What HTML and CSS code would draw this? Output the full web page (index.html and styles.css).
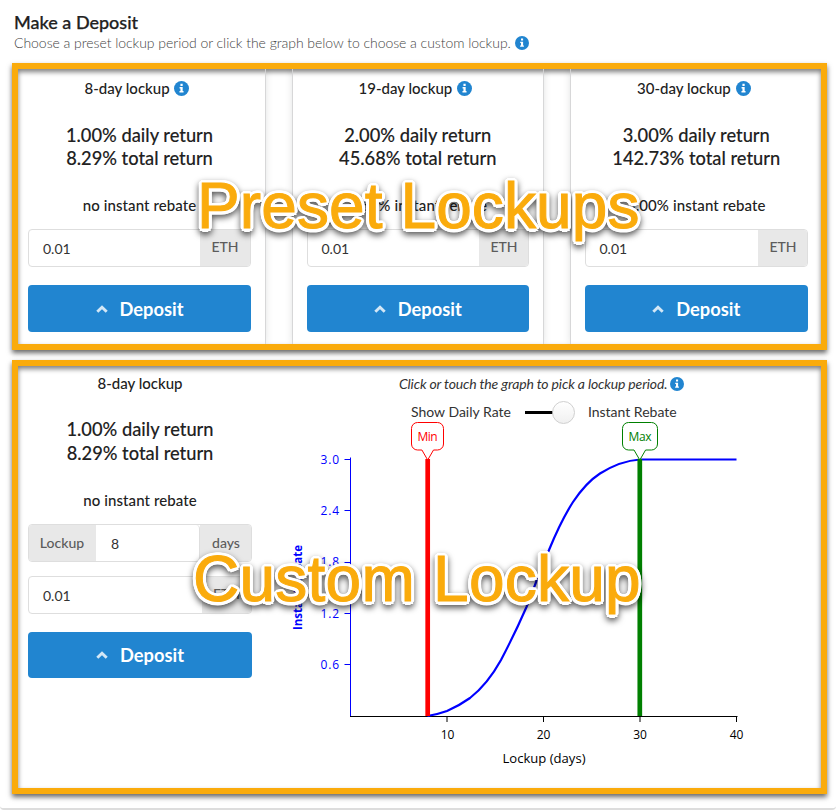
FILE: index.html
```
<!DOCTYPE html>
<html lang="en">
<head>
<meta charset="utf-8">
<title>Make a Deposit</title>
<link rel="stylesheet" href="styles.css">
</head>
<body>
<svg class="defs" aria-hidden="true">
  <symbol id="info" viewBox="0 0 14 14">
    <circle cx="7" cy="7" r="7" fill="#2185d0"/>
    <path d="M6 2.6h2.1v2H6zM5.2 5.7h2.9v3.7h.8v1.3H5.1V9.400h.9V7h-.8z" fill="#fff"/>
  </symbol>
  <symbol id="chevron" viewBox="0 0 12 8">
    <path d="M1.300 6.800 6 2.200l4.700 4.600" fill="none" stroke="#d3e7f6" stroke-width="2.900"/>
  </symbol>
</svg>
<main class="panel">
  <header class="head">
    <h1>Make a Deposit</h1>
    <p>Choose a preset lockup period or click the graph below to choose a custom lockup. <svg class="info"><use href="#info"/></svg></p>
  </header>

  <section class="frame presets">
    <article class="card first">
      <h2>8-day lockup <svg class="info"><use href="#info"/></svg></h2>
      <div class="returns">1.00% daily return<br>8.29% total return</div>
      <div class="rebate">no instant rebate</div>
      <div class="field"><span class="value">0.01</span><span class="unit">ETH</span></div>
      <button class="deposit"><svg class="chev"><use href="#chevron"/></svg>Deposit</button>
    </article>
    <article class="card">
      <h2>19-day lockup <svg class="info"><use href="#info"/></svg></h2>
      <div class="returns">2.00% daily return<br>45.68% total return</div>
      <div class="rebate">1.50% instant rebate</div>
      <div class="field"><span class="value">0.01</span><span class="unit">ETH</span></div>
      <button class="deposit"><svg class="chev"><use href="#chevron"/></svg>Deposit</button>
    </article>
    <article class="card last">
      <h2>30-day lockup <svg class="info"><use href="#info"/></svg></h2>
      <div class="returns">3.00% daily return<br>142.73% total return</div>
      <div class="rebate">3.00% instant rebate</div>
      <div class="field"><span class="value">0.01</span><span class="unit">ETH</span></div>
      <button class="deposit"><svg class="chev"><use href="#chevron"/></svg>Deposit</button>
    </article>
    <div class="callout callout-preset">Preset Lockups</div>
  </section>

  <section class="frame custom">
    <div class="form">
      <h2>8-day lockup</h2>
      <div class="returns">1.00% daily return<br>8.29% total return</div>
      <div class="rebate">no instant rebate</div>
      <div class="field period"><span class="unit left">Lockup</span><span class="value">8</span><span class="unit">days</span></div>
      <div class="field"><span class="value">0.01</span><span class="unit">ETH</span></div>
      <button class="deposit"><svg class="chev"><use href="#chevron"/></svg>Deposit</button>
    </div>
    <div class="graph">
      <p class="hint">Click or touch the graph to pick a lockup period. <svg class="info"><use href="#info"/></svg></p>
      <div class="switch"><span>Show Daily Rate</span><span class="toggle"></span><span>Instant Rebate</span></div>
      <svg class="chart" viewBox="285 422 460 350">
        <g stroke="#00f" stroke-width="1">
          <path d="M350.500 457.500V716.500M344.500 459.500h6M344.500 510.500h6M344.500 562.500h6M344.500 613.500h6M344.500 664.500h6" fill="none"/>
        </g>
        <g class="ylab">
          <text x="320.500" y="464" textLength="18.500">3.0</text>
          <text x="320.500" y="515" textLength="18.500">2.4</text>
          <text x="320.500" y="566" textLength="18.500">1.8</text>
          <text x="320.500" y="618" textLength="18.500">1.2</text>
          <text x="320.500" y="669" textLength="18.500">0.6</text>
        </g>
        <text class="ytitle" transform="translate(302 630) rotate(-90)" textLength="85" lengthAdjust="spacingAndGlyphs">Instant Rebate</text>
        <path d="M350 716.500H737.500M447 716v6M543.500 716v6M640 716v6M736.500 716v6" fill="none" stroke="#000"/>
        <g class="xlab">
          <text x="447.500" y="739">10</text><text x="543.500" y="739">20</text><text x="640" y="739">30</text><text x="736.500" y="739">40</text>
        </g>
        <text class="xtitle" x="502.500" y="763" textLength="83" lengthAdjust="spacingAndGlyphs">Lockup (days)</text>
        <path d="M427.500 716C434 715 440 713.500 447 711C455 707.500 463 703 470 698C479 691 491 678 501 660C512 639 520 622 526.500 607C534 588 541 568 549 550C556 533 564 516 573 502C581 490 590 480 600 473.500C612 466 625 460.500 640 459.500H736.500" fill="none" stroke="#00f" stroke-width="2.200"/>
        <path d="M427.700 459V716" stroke="red" stroke-width="4.700"/>
        <path d="M639.800 459V716" stroke="green" stroke-width="4.700"/>
        <path d="M417.500 422.500h20a6 6 0 0 1 6 6v15.500a6 6 0 0 1-6 6h-4l-5.800 10-5.800-10h-4.400a6 6 0 0 1-6-6v-15.500a6 6 0 0 1 6-6z" fill="#fff" stroke="red"/>
        <path d="M628.500 422.500h23a6 6 0 0 1 6 6v15.500a6 6 0 0 1-6 6h-5.900l-5.800 10-5.800-10h-5.500a6 6 0 0 1-6-6v-15.500a6 6 0 0 1 6-6z" fill="#fff" stroke="green"/>
        <text class="pin" x="417.500" y="441" fill="red" textLength="20">Min</text>
        <text class="pin" x="628.500" y="441" fill="green" textLength="23">Max</text>
      </svg>
    </div>
    <div class="callout callout-custom">Custom Lockup</div>
  </section>
</main>
</body>
</html>
```
FILE: styles.css
```
* { box-sizing: border-box; }
body {
  margin: 0;
  width: 836px;
  height: 810px;
  overflow: hidden;
  background: #fff;
  color: #212121;
  font-family: Lato, "Liberation Sans", sans-serif;
  font-size: 14px;
}
.defs { display: none; }
.panel {
  width: 836px;
  height: 810px;
  border-bottom: 2px solid #ddd;
  border-radius: 4px;
}
.head { height: 63px; padding: 11px 14px 0; }
h1 { margin: 0; font-size: 18px; line-height: 22px; font-weight: 500; -webkit-text-stroke: .25px; }
.head p { margin: 0; line-height: 20px; font-weight: 300; font-size: 14px; letter-spacing: -.04px; color: #444; }
.info { width: 14px; height: 14px; vertical-align: -2px; }

.frame {
  position: relative;
  width: 815px;
  margin-left: 12px;
  border: 6px solid #faab0c;
  box-shadow: 0 3px 5px rgba(0,0,0,.6), inset 0 3px 5px rgba(0,0,0,.5);
}
.presets {
  height: 287px;
  display: grid;
  grid-template-columns: 247px 250.500px 250.500px;
  column-gap: 27.500px;
}
.card {
  padding: 10px 14px 0;
  box-shadow: 0 0 0 1px rgba(212,212,213,.9), 0 0 8px rgba(34,36,38,.16);
  clip-path: inset(0 -10px);
}
.card.first { padding-left: 10px; clip-path: inset(0 -10px 0 0); }
.card.last { padding-right: 13px; clip-path: inset(0 0 0 -10px); }

h2 {
  margin: 0;
  height: 20px;
  font-size: 15px;
  line-height: 18px;
  font-weight: 500;
  text-align: center;
}
.card h2 { padding-right: 5px; }
.card h2 .info { width: 15px; height: 15px; margin-left: 1px; }
.returns {
  margin-top: 24.500px;
  font-size: 18.300px;
  line-height: 23.500px;
  font-weight: 500;
  text-align: center;
  -webkit-text-stroke: .1px;
}
.rebate {
  margin-top: 25px;
  height: 20px;
  font-size: 15px;
  letter-spacing: .1px;
  line-height: 18px;
  font-weight: 500;
  text-align: center;
}
.field {
  display: flex;
  height: 38px;
  margin-top: 13.500px;
  border: 1px solid #dedede;
  border-radius: 4px;
  overflow: hidden;
}
.value { flex: 1; padding-left: 14px; line-height: 38px; font-size: 14px; color: #333; }
.unit {
  width: 51px;
  margin: -1px -1px -1px 0;
  padding-right: 1px;
  background: #e8e8e8;
  color: #5c5c5c;
  font-size: 14px;
  font-weight: 500;
  line-height: 36px;
  text-align: center;
}
.card:not(.first) .unit { width: 50px; padding-right: 0; }
.deposit {
  display: flex;
  align-items: center;
  justify-content: center;
  width: 100%;
  height: 47px;
  margin-top: 18px;
  padding: 0;
  border: 0;
  border-radius: 4px;
  background: #2185d0;
  color: #fff;
  font: 700 18.300px/24px Lato, sans-serif;
}
.chev { width: 12px; height: 8px; margin-right: 12px; }

.custom { height: 434px; margin-top: 10px; display: flex; }
.form { width: 234px; padding: 8px 0 0 10px; }
.form .returns { margin-top: 24px; }
.form .rebate { margin-top: 25.500px; }
.period { margin-top: 13px; }
.period .unit { width: 52px; padding-right: 0; line-height: 38px; }
.period .left { width: 68px; margin: -1px 0 -1px -1px; }
.period .value { padding-left: 15px; border-right: 1px solid #dedede; border-radius: 0 4px 4px 0; }
.period + .field { margin-top: 14px; }
.period + .field .unit { width: 50px; }
.form .deposit { height: 46px; }
.graph { width: 516px; margin-left: 33px; padding-top: 8px; }
.hint {
  margin: 0;
  padding-left: 114px;
  line-height: 20px;
  font-style: italic;
  font-size: 14px;
  letter-spacing: -.15px;
  color: #333;
  white-space: nowrap;
}
.switch {
  display: flex;
  align-items: center;
  height: 20px;
  margin-top: 8px;
  padding-left: 126px;
  font-size: 14px;
  line-height: 18px;
  color: #333;
  white-space: nowrap;
}
.switch span:not(.toggle) { padding-bottom: 1px; }
.toggle {
  display: flex;
  align-items: center;
  justify-content: flex-end;
  width: 50px;
  height: 20px;
  margin: 0 13px 0 14px;
  background: linear-gradient(#000, #000) 0 50% / 40px 3px no-repeat;
}
.toggle::after {
  content: "";
  width: 21px;
  height: 21px;
  border: 1px solid #d0d0d0;
  border-radius: 50%;
  background: linear-gradient(#fff, #f0f0f0);
}
.chart { display: block; width: 460px; height: 350px; font-family: "Open Sans", sans-serif; font-size: 12px; overflow: visible; }
.ylab { fill: #00f; }
.ytitle { fill: #00f; font-weight: 700; font-size: 12px; }
.xlab { text-anchor: middle; }
.xtitle { font-size: 13px; font-weight: 500; }
.pin { font-size: 12px; font-weight: 500; }

.callout {
  position: absolute;
  color: #faab0c;
  font: 64px/74px "Liberation Sans", Arial, sans-serif;
  letter-spacing: .1px;
  white-space: nowrap;
  -webkit-text-stroke: 1px #faab0c;
  text-shadow:
    3.500px 0 #fff, 3.200px 1.300px #fff, 2.500px 2.500px #fff, 1.300px 3.200px #fff,
    0 3.500px #fff, -1.300px 3.200px #fff, -2.500px 2.500px #fff, -3.200px 1.300px #fff,
    -3.500px 0 #fff, -3.200px -1.300px #fff, -2.500px -2.500px #fff, -1.300px -3.200px #fff,
    0 -3.500px #fff, 1.300px -3.200px #fff, 2.500px -2.500px #fff, 3.200px -1.300px #fff;
  filter: drop-shadow(0 3px 3px rgba(0,0,0,.65));
}
.callout-preset { left: 179px; top: 100px; }
.callout-custom { left: 175px; top: 176px; letter-spacing: .25px; }
```
